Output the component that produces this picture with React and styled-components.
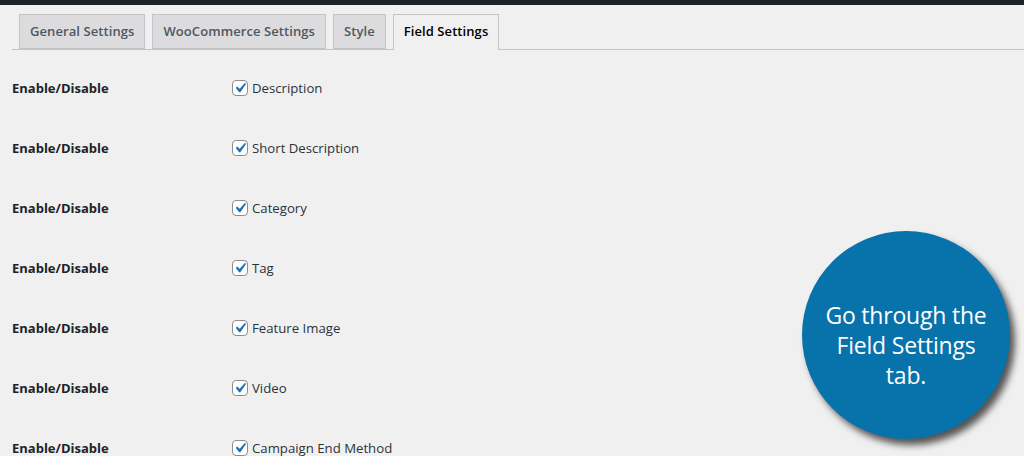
import React from 'react';
import styled, { createGlobalStyle } from 'styled-components';

const GlobalStyle = createGlobalStyle`
  html, body {
    margin: 0;
    padding: 0;
    background: #f0f0f1;
  }
  body {
    font-family: "Open Sans", "Noto Sans", sans-serif;
    color: #1d2327;
    overflow: hidden;
  }
`

const Page = styled.div`
  position: relative;
  width: 1024px;
  height: 456px;
  overflow: hidden;
`

const TopBar = styled.div`
  height: 5px;
  background: #1d2327;
`

const TabWrapper = styled.nav`
  display: flex;
  align-items: flex-end;
  margin: 9px 0 0 12px;
  border-bottom: 1px solid #c3c4c7;
`

const Tab = styled.a`
  display: block;
  box-sizing: border-box;
  height: ${p => (p.active ? '36px' : '35px')};
  margin: 0 0 ${p => (p.active ? '-1px' : '0')} ${p => (p.first ? '7px' : '7px')};
  padding: 0 10px;
  border: 1px solid #c3c4c7;
  border-bottom: ${p => (p.active ? 'none' : '1px solid #c3c4c7')};
  background: ${p => (p.active ? '#f0f0f1' : '#dcdcde')};
  color: ${p => (p.active ? '#000' : '#50575e')};
  font-size: 13px;
  font-weight: 600;
  letter-spacing: 0.08px;
  line-height: 33px;
  white-space: nowrap;
  cursor: pointer;
`

const Form = styled.div`
  margin: 8px 0 0 12px;
`

const Row = styled.div`
  display: grid;
  grid-template-columns: 220px 1fr;
  align-items: center;
  height: 60px;
`

const Label = styled.div`
  font-size: 13px;
  font-weight: 700;
  color: #1d2327;
`

const Field = styled.label`
  display: flex;
  align-items: center;
  gap: 4px;
  font-size: 13.2px;
  color: #2c3338;
`

const Box = styled.span`
  position: relative;
  display: inline-block;
  box-sizing: border-box;
  width: 16px;
  height: 16px;
  border: 1px solid #8c8f94;
  border-radius: 4px;
  background: #fff;

  svg {
    position: absolute;
    left: -3px;
    top: -3px;
  }
`

const Bubble = styled.div`
  position: absolute;
  left: 802px;
  top: 231px;
  width: 208px;
  height: 208px;
  box-sizing: border-box;
  padding-top: 20px;
  border-radius: 50%;
  background: #0872ab;
  box-shadow: 5px 6px 7px rgba(0, 0, 0, 0.65);
  display: flex;
  align-items: center;
  justify-content: center;
  text-align: center;
  color: #fff;
  font-family: "Open Sans", "Lato", sans-serif;
  font-size: 23px;
  line-height: 30px;
  letter-spacing: -0.2px;
`

const Check = () => (
  <svg width="20" height="20" viewBox="0 0 20 20">
    <path d="M14.83 4.89l1.34.94-5.81 8.38H9.02L5.78 9.67l1.34-1.25 2.57 2.4z" fill="#2271b1" />
  </svg>
)

const tabs = ['General Settings', 'WooCommerce Settings', 'Style', 'Field Settings']
const fields = ['Description', 'Short Description', 'Category', 'Tag', 'Feature Image', 'Video', 'Campaign End Method']

export default function App() {
  return (
    <Page>
      <GlobalStyle />
      <TopBar />
      <TabWrapper>
        {tabs.map((t, i) => (
          <Tab key={t} first={i === 0} active={t === 'Field Settings'}>{t}</Tab>
        ))}
      </TabWrapper>
      <Form>
        {fields.map(f => (
          <Row key={f}>
            <Label>Enable/Disable</Label>
            <Field>
              <Box><Check /></Box>
              {f}
            </Field>
          </Row>
        ))}
      </Form>
      <Bubble>
        Go through the<br />Field Settings<br />tab.
      </Bubble>
    </Page>
  )
}
